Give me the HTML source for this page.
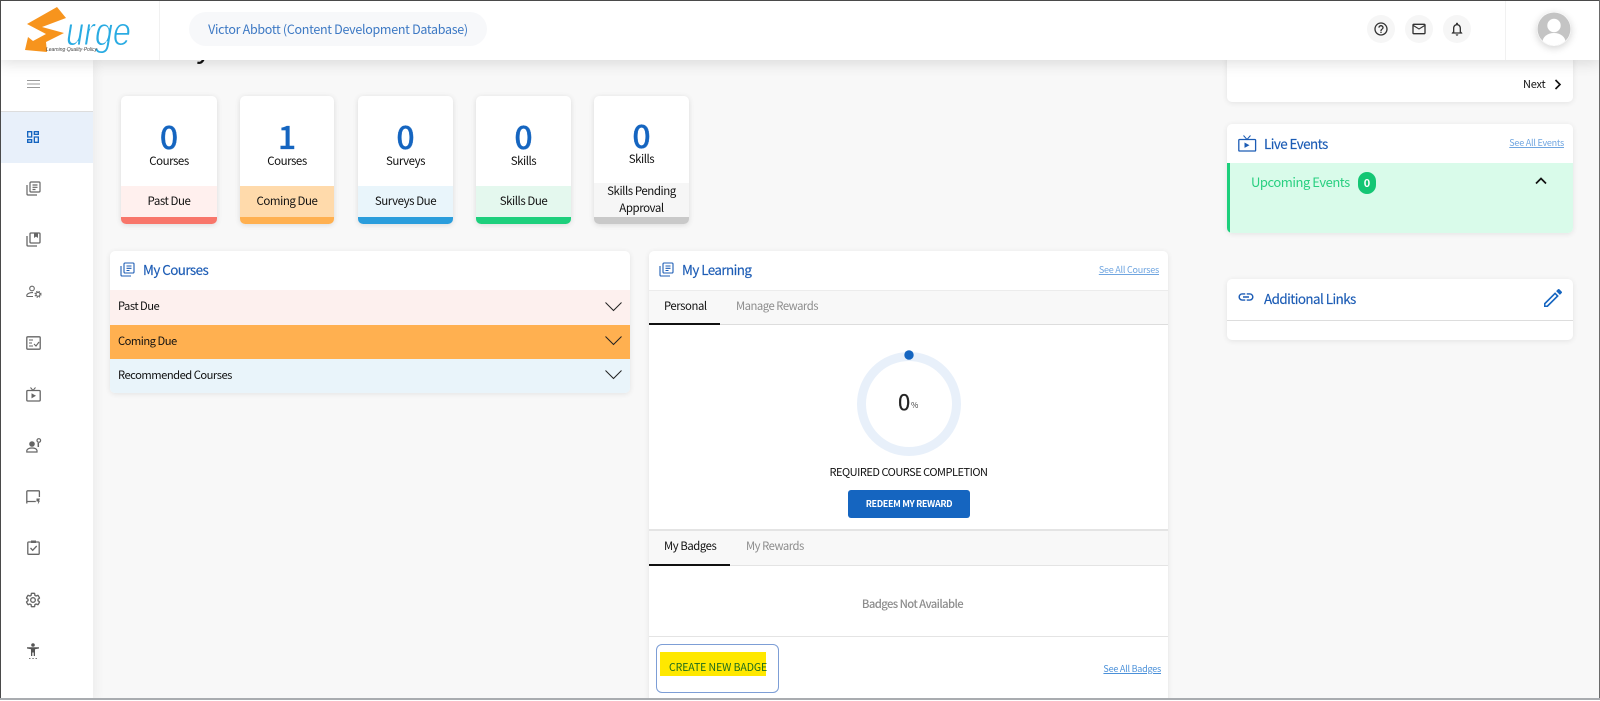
<!DOCTYPE html>
<html><head><meta charset="utf-8"><title>Surge</title>
<style>
*{box-sizing:border-box;margin:0;padding:0}
html,body{width:1600px;height:701px;overflow:hidden;background:#f8f8f8}
body{position:relative;font-family:"Noto Sans CJK SC","Liberation Sans",sans-serif;color:#111;font-size:11.3px;letter-spacing:-.42px}
.a{position:absolute}
.t{position:absolute;white-space:nowrap;line-height:16px}
.c{text-align:center}
.card{position:absolute;background:#fff;border-radius:5px;box-shadow:0 1px 6px rgba(0,0,0,.09)}
.stat{position:absolute;top:96px;height:128px;background:#fff;border-radius:5px;box-shadow:0 1px 6px rgba(0,0,0,.12);overflow:hidden;text-align:center}
.stat b{position:absolute;left:0;right:0;top:18px;font-weight:500;font-size:32px;line-height:44px;color:#1565c0;letter-spacing:0;-webkit-text-stroke:.3px #1565c0}
.stat i{position:absolute;left:0;right:0;top:57px;font-style:normal;font-size:11.500px;line-height:16px;letter-spacing:-.48px}
.stat u{position:absolute;left:0;right:0;top:90px;height:31px;text-decoration:none;line-height:31px;font-size:11.500px;letter-spacing:-.45px}
.stat s{position:absolute;left:0;right:0;bottom:0;height:7px;text-decoration:none}
.title{color:#1c5cb5;font-size:13.400px;letter-spacing:-.55px;-webkit-text-stroke:.15px #1c5cb5}
.lnk{color:#6fa5e0;font-size:9px;letter-spacing:-.22px;text-decoration:underline}
.row{position:absolute;left:0;right:0;padding-left:8px;font-size:11.200px;letter-spacing:-.5px}
.i{position:absolute;fill:none;stroke:#666}
.f{fill:#666;stroke:none}
</style></head><body>

<!-- page title remnant -->
<div class="t" style="left:196px;top:27px;font-size:30px;line-height:34px;letter-spacing:0;color:#111">y</div>

<!-- sidebar -->
<div class="a" style="left:0;top:60px;width:93px;height:641px;background:#fff;box-shadow:3px 0 10px rgba(0,0,0,.05)"></div>
<div class="a" style="left:1px;top:111px;width:92px;height:52px;background:#e8f0fa;border-top:1px solid #ddd"></div>

<svg class="i" style="left:27px;top:78px;stroke:#999" width="13" height="12" viewBox="0 0 13 12" stroke-width="1.100"><path d="M0 2.500h13M0 6h13M0 9.500h13"/></svg>
<svg class="a" style="left:25px;top:129px" width="16" height="16" viewBox="0 0 24 24"><path fill="#1565c0" d="M19 5v2h-4V5h4M9 5v6H5V5h4m10 8v6h-4v-6h4M9 17v2H5v-2h4M21 3h-8v6h8V3zM11 3H3v10h8V3zm10 8h-8v10h8V11zm-10 4H3v6h8v-6z"/></svg>
<svg class="i" style="left:26px;top:181px" width="15" height="15" viewBox="0 0 15 15" stroke-width="1.200"><rect x="4" y="1" width="10" height="10" rx="1"/><path d="M1 4v9a1 1 0 0 0 1 1h9M6.500 4h5M6.500 6.300h5M6.500 8.500h3"/></svg>
<svg class="i" style="left:26px;top:232px" width="15" height="15" viewBox="0 0 15 15" stroke-width="1.300"><rect x="4" y="1" width="10" height="10" rx="1"/><path d="M1 4v9a1 1 0 0 0 1 1h9"/><path class="f" d="M8 1h4v5l-2-1.400L8 6z"/></svg>
<svg class="i" style="left:26px;top:285px" width="16" height="15" viewBox="0 0 16 15" stroke-width="1.100"><circle cx="6" cy="3.500" r="2.300"/><path d="M.8 11.500v-1.200C1 8.500 4 7.500 7 7.600M.8 11.500H7"/><circle cx="12" cy="9.300" r="2"/><circle cx="12" cy="9.300" r="3" stroke-dasharray="1.200 1.200"/></svg>
<svg class="i" style="left:26px;top:336px" width="15" height="14" viewBox="0 0 15 14" stroke-width="1.300"><rect x=".8" y=".8" width="13.400" height="12.400" rx="1"/><path d="M3 4h4M3 7h3M3 10h4M8 8l2 2 3-4" stroke-width="1.100"/></svg>
<svg class="i" style="left:26px;top:387px" width="15" height="15" viewBox="0 0 15 15" stroke-width="1.300"><rect x=".8" y="3.500" width="13.400" height="10.500" rx="1"/><path d="M4.500 .5l2.500 3 2.500-3" stroke-width="1"/><path class="f" d="M5.500 6.200l4.500 2.600-4.500 2.600z"/></svg>
<svg class="i" style="left:26px;top:438px" width="16" height="15" viewBox="0 0 16 15" stroke-width="1.200"><circle class="f" cx="6" cy="6" r="2.800"/><path d="M.8 14v-1.500C1.500 10.500 4 10 6 10s4.500.5 5 2.500V14H.8z"/><circle cx="12.800" cy="2.500" r="1.800"/><path d="M12.300 5v4" stroke-width="1.500"/></svg>
<svg class="i" style="left:26px;top:490px" width="15" height="15" viewBox="0 0 15 15" stroke-width="1.300"><path d="M.8 13.500V1.600a.8.800 0 0 1 .8-.8h11a.8.800 0 0 1 .8.800V7M.8 11.500h9"/><path class="f" d="M10.500 8.500h3.500l-1 2.200h1L11.800 14.500l.4-3H10.500z"/></svg>
<svg class="i" style="left:27px;top:540px" width="13" height="15" viewBox="0 0 13 15" stroke-width="1.300"><rect x=".8" y="2" width="11.400" height="12.300" rx=".8"/><path d="M3.500 8l2.200 2.300 4-4.300"/><path class="f" d="M4 .5h5v2.500H4z"/></svg>
<svg class="a" style="left:25px;top:592px" width="16" height="16" viewBox="0 0 24 24" fill="none" stroke="#666" stroke-width="2"><path d="M19.430 12.980c.04-.32.07-.64.07-.98 0-.34-.03-.66-.07-.98l2.110-1.650c.19-.15.24-.42.12-.64l-2-3.460c-.09-.16-.26-.25-.44-.25-.06 0-.12.01-.17.03l-2.490 1c-.52-.4-1.080-.73-1.690-.98l-.38-2.650C14.460 2.180 14.250 2 14 2h-4c-.25 0-.46.18-.49.42l-.38 2.650c-.61.25-1.170.59-1.690.98l-2.490-1c-.06-.02-.12-.03-.18-.03-.17 0-.34.09-.43.25l-2 3.460c-.13.22-.07.49.12.64l2.110 1.650c-.04.32-.07.65-.07.98 0 .33.03.66.07.98l-2.110 1.650c-.19.15-.24.42-.12.64l2 3.460c.09.16.26.25.44.25.06 0 .12-.01.17-.03l2.490-1c.52.4 1.080.73 1.690.98l.38 2.650c.03.24.24.42.49.42h4c.25 0 .46-.18.49-.42l.38-2.650c.61-.25 1.170-.59 1.690-.98l2.490 1c.06.02.12.03.18.03.17 0 .34-.09.43-.25l2-3.460c.12-.22.07-.49-.12-.64l-2.110-1.650z"/><circle cx="12" cy="12" r="3.500"/></svg>
<svg class="a" style="left:26px;top:643px" width="14" height="17" viewBox="0 0 14 17"><circle cx="7" cy="2" r="1.800" fill="#555"/><path fill="#555" d="M1 4.200h12v1.300L9 6.300V13H7.700V9.500H6.300V13H5V6.300L1 5.500z"/><path d="M3 15.500h1.500M6.300 15.500h1.500M9.500 15.500H11" stroke="#777" stroke-width="1"/></svg>

<!-- stat cards -->
<div class="stat" style="left:121px;width:96px"><b>0</b><i>Courses</i><u style="background:#fff0ee">Past Due</u><s style="background:#f8766a"></s></div>
<div class="stat" style="left:240px;width:94px"><b>1</b><i>Courses</i><u style="background:#ffdaab">Coming Due</u><s style="background:#ffb050"></s></div>
<div class="stat" style="left:358px;width:95px"><b>0</b><i>Surveys</i><u style="background:#e9f5fb">Surveys Due</u><s style="background:#2a9ddc"></s></div>
<div class="stat" style="left:476px;width:95px"><b>0</b><i>Skills</i><u style="background:#e4f8ee">Skills Due</u><s style="background:#1dcf7c"></s></div>
<div class="stat" style="left:594px;width:95px"><b style="top:17px">0</b><i style="top:55px">Skills</i><u style="top:87px;height:41px;background:#f6f6f6;line-height:16.500px">Skills Pending<br>Approval</u><s style="background:#c9c9c9"></s></div>

<!-- My Courses -->
<div class="card" style="left:110px;top:251px;width:520px;height:142px;overflow:hidden">
  <svg class="i" style="left:10px;top:11px;stroke:#1c5cb5" width="15" height="15" viewBox="0 0 15 15" stroke-width="1.100"><rect x="4" y="1" width="10" height="10" rx="1"/><path d="M1 4v9a1 1 0 0 0 1 1h9M6.500 4h5M6.500 6.300h5M6.500 8.500h3"/></svg>
  <div class="t title" style="left:33px;top:10px">My Courses</div>
  <div class="row" style="top:39px;height:35px;line-height:32px;background:#fdf0ee">Past Due</div>
  <div class="row" style="top:74px;height:34px;line-height:32px;background:#ffb050">Coming Due</div>
  <div class="row" style="top:108px;height:34px;line-height:32px;background:#e9f4fa">Recommended Courses</div>
  <svg class="a" style="left:495px;top:51px" width="17" height="10" viewBox="0 0 17 10" fill="none" stroke="#222" stroke-width="1"><path d="M.5 .5l8 8 8-8"/></svg>
  <svg class="a" style="left:495px;top:85px" width="17" height="10" viewBox="0 0 17 10" fill="none" stroke="#222" stroke-width="1"><path d="M.5 .5l8 8 8-8"/></svg>
  <svg class="a" style="left:495px;top:119px" width="17" height="10" viewBox="0 0 17 10" fill="none" stroke="#222" stroke-width="1"><path d="M.5 .5l8 8 8-8"/></svg>
</div>

<!-- My Learning -->
<div class="card" style="left:649px;top:251px;width:519px;height:460px;overflow:hidden">
  <svg class="i" style="left:10px;top:11px;stroke:#1c5cb5" width="15" height="15" viewBox="0 0 15 15" stroke-width="1.100"><rect x="4" y="1" width="10" height="10" rx="1"/><path d="M1 4v9a1 1 0 0 0 1 1h9M6.500 4h5M6.500 6.300h5M6.500 8.500h3"/></svg>
  <div class="t title" style="left:33px;top:10px">My Learning</div>
  <div class="t lnk" style="right:9px;top:11px">See All Courses</div>

  <div class="a" style="left:0;top:39px;width:519px;height:35px;background:#f8f8f8;border-top:1px solid #ececec;border-bottom:1px solid #ddd"></div>
  <div class="a" style="left:0;top:39px;width:71px;height:35px;border-bottom:2px solid #111"></div>
  <div class="t" style="left:15px;top:47px">Personal</div>
  <div class="t" style="left:87px;top:47px;color:#8d8d8d;letter-spacing:-.5px">Manage Rewards</div>

  <svg class="a" style="left:201px;top:94px" width="118" height="118" viewBox="0 0 118 118"><circle cx="59" cy="59" r="47.500" fill="none" stroke="#e8f0fa" stroke-width="9"/><circle cx="59" cy="10" r="4.700" fill="#1565c0"/></svg>
  <div class="t" style="left:249px;top:136px;font-size:22px;line-height:28px;letter-spacing:0;color:#222;-webkit-text-stroke:.25px #222">0</div>
  <div class="t" style="left:262px;top:149px;font-size:8px;line-height:12px;letter-spacing:0;color:#444">%</div>
  <div class="t c" style="left:0;width:519px;top:213px;font-size:11px;letter-spacing:-.48px;color:#111">REQUIRED COURSE COMPLETION</div>
  <div class="a c" style="left:199px;top:239px;width:122px;height:28px;background:#1565c0;border-radius:3px;color:#fff;font-size:9px;letter-spacing:-.35px;font-weight:700;line-height:28px">REDEEM MY REWARD</div>

  <div class="a" style="left:0;top:278px;width:519px;height:37px;background:#f8f8f8;border-top:2px solid #e4e4e4;border-bottom:1px solid #e4e4e4"></div>
  <div class="a" style="left:0;top:280px;width:81px;height:35px;border-bottom:2px solid #111"></div>
  <div class="t" style="left:15px;top:287px">My Badges</div>
  <div class="t" style="left:97px;top:287px;color:#8d8d8d;letter-spacing:-.5px">My Rewards</div>
  <div class="t c" style="left:0;width:527px;top:345px;color:#8d8d8d;font-weight:500;letter-spacing:-.6px">Badges Not Available</div>
  <div class="a" style="left:0;top:385px;width:519px;height:1px;background:#e4e4e4"></div>
  <div class="a" style="left:7px;top:393px;width:123px;height:49px;border:1px solid #7d9ed6;border-radius:6px"></div>
  <div class="a" style="left:11px;top:401px;width:106px;height:24px;background:#ffe800"></div>
  <div class="t" style="left:20px;top:409px;font-size:10.500px;letter-spacing:-.08px;color:#1d6b1d">CREATE NEW BADGE</div>
  <div class="t lnk" style="right:7px;top:410px;color:#4a90d9">See All Badges</div>
</div>

<!-- Right column -->
<div class="card" style="left:1227px;top:40px;width:346px;height:62px">
  <div class="t" style="left:296px;top:36px;font-size:11px;letter-spacing:-.2px">Next</div>
  <svg class="a" style="left:327px;top:39px" width="8" height="11" viewBox="0 0 8 11" fill="none" stroke="#111" stroke-width="1.600"><path d="M1.500 1l4.500 4.500L1.500 10"/></svg>
</div>

<div class="card" style="left:1227px;top:124px;width:346px;height:109px;overflow:hidden">
  <svg class="a" style="left:11px;top:11px;" width="19" height="17" viewBox="0 0 19 17" fill="none" stroke="#1c5cb5" stroke-width="1.300"><rect x=".8" y="4.500" width="16.800" height="11.500" rx=".8"/><path d="M5.500 .5L9 4.500 12.500 .5" stroke-width="1"/><path d="M6.500 7.500l5 2.700-5 2.700z" fill="#1c5cb5" stroke="none"/></svg>
  <div class="t title" style="left:37px;top:11px">Live Events</div>
  <div class="t lnk" style="right:9px;top:11px">See All Events</div>
  <div class="a" style="left:0;top:39px;width:346px;height:70px;background:#d9fbea;border-left:3px solid #1dcf7c"></div>
  <div class="t" style="left:24px;top:50px;font-size:13px;letter-spacing:-.46px;color:#28cf80">Upcoming Events</div>
  <div class="a c" style="left:131px;top:48px;width:18px;height:22px;border-radius:9px;background:#14c674;color:#fff;font-weight:700;font-size:11px;letter-spacing:0;line-height:22px">0</div>
  <svg class="a" style="left:308px;top:53px" width="12" height="8" viewBox="0 0 12 8" fill="none" stroke="#111" stroke-width="1.700"><path d="M1 6.500l5-5 5 5"/></svg>
</div>

<div class="card" style="left:1227px;top:279px;width:346px;height:61px">
  <svg class="a" style="left:10px;top:9px" width="18" height="18" viewBox="0 0 24 24"><path fill="#1c5cb5" d="M3.900 12c0-1.710 1.390-3.100 3.100-3.100h4V7H7c-2.760 0-5 2.240-5 5s2.240 5 5 5h4v-1.900H7c-1.710 0-3.100-1.390-3.100-3.100zM8 13h8v-2H8v2zm9-6h-4v1.900h4c1.710 0 3.100 1.390 3.100 3.100s-1.390 3.100-3.100 3.100h-4V17h4c2.760 0 5-2.240 5-5s-2.240-5-5-5z"/></svg>
  <div class="t title" style="left:37px;top:11px">Additional Links</div>
  <svg class="a" style="left:314px;top:7px" width="24" height="24" viewBox="0 0 24 24"><path fill="#1565c0" d="M3 17.250V21h3.750L17.810 9.940l-3.750-3.750L3 17.250zM5.900 19.500H4.500v-1.400l9.560-9.560 1.400 1.400L5.900 19.500zM20.710 7.040c.39-.39.39-1.020 0-1.410l-2.340-2.340c-.39-.39-1.020-.39-1.410 0l-1.830 1.830 3.750 3.750 1.830-1.830z"/></svg>
  <div class="a" style="left:0;top:41px;width:346px;height:1px;background:#ddd"></div>
</div>

<!-- Header -->
<div class="a" style="left:0;top:0;width:1600px;height:60px;background:#fff;box-shadow:0 3px 14px rgba(0,0,0,.13)"></div>
<div class="a" style="left:159px;top:0;width:1px;height:60px;background:#f1f1f1"></div>
<div class="a" style="left:1505px;top:0;width:1px;height:60px;background:#f1f1f1"></div>
<svg class="a" style="left:0;top:0" width="159" height="60" viewBox="0 0 159 60">
  <path fill="#f7941d" d="M57 7L66 18 42 27 64 33 46 42 47 52 25 50 28 37 33 41 46 34 27 24z"/>
  <text x="66" y="45" font-family="Liberation Sans" font-style="italic" font-size="40" fill="#29abe2" stroke="#fff" stroke-width=".9" textLength="65" lengthAdjust="spacingAndGlyphs" letter-spacing="0">urge</text>
  <text x="46" y="51" font-family="Liberation Sans" font-style="italic" font-size="5" fill="#444" textLength="51" lengthAdjust="spacingAndGlyphs" letter-spacing="0">Learning·Quality·Policy</text>
</svg>
<div class="a c" style="left:189px;top:12px;width:298px;height:34px;border-radius:17px;background:#f7f8fa;color:#3d79c4;font-size:12.500px;letter-spacing:-.3px;line-height:33px">Victor Abbott (Content Development Database)</div>

<div class="a" style="left:1367px;top:15px;width:28px;height:28px;border-radius:50%;background:#f6f6f6"></div>
<div class="a" style="left:1405px;top:15px;width:28px;height:28px;border-radius:50%;background:#f6f6f6"></div>
<div class="a" style="left:1443px;top:15px;width:28px;height:28px;border-radius:50%;background:#f6f6f6"></div>
<svg class="a" style="left:1373px;top:21px" width="16" height="16" viewBox="0 0 24 24"><path fill="#333" d="M11 18h2v-2h-2v2zm1-16C6.480 2 2 6.480 2 12s4.480 10 10 10 10-4.480 10-10S17.520 2 12 2zm0 18c-4.410 0-8-3.590-8-8s3.590-8 8-8 8 3.590 8 8-3.590 8-8 8zm0-14c-2.210 0-4 1.790-4 4h2c0-1.100.9-2 2-2s2 .9 2 2c0 2-3 1.750-3 5h2c0-2.250 3-2.500 3-5 0-2.210-1.790-4-4-4z"/></svg>
<svg class="a" style="left:1411px;top:21px" width="16" height="16" viewBox="0 0 24 24"><path fill="#333" d="M20 4H4c-1.100 0-1.990.9-1.990 2L2 18c0 1.100.9 2 2 2h16c1.100 0 2-.9 2-2V6c0-1.100-.9-2-2-2zm0 14H4V8l8 5 8-5v10zm-8-7L4 6h16l-8 5z"/></svg>
<svg class="a" style="left:1449px;top:21px" width="16" height="16" viewBox="0 0 24 24"><path fill="#333" d="M12 22c1.100 0 2-.9 2-2h-4c0 1.100.9 2 2 2zm6-6v-5c0-3.070-1.630-5.640-4.500-6.320V4c0-.83-.67-1.500-1.500-1.500s-1.500.67-1.500 1.500v.68C7.640 5.360 6 7.920 6 11v5l-2 2v1h16v-1l-2-2zm-2 1H8v-6c0-2.480 1.510-4.500 4-4.500s4 2.020 4 4.500v6z"/></svg>

<div class="a" style="left:1537px;top:12px;width:34px;height:34px;border-radius:50%;box-shadow:0 2px 8px rgba(0,0,0,.18)"></div>
<svg class="a" style="left:1537px;top:12px" width="34" height="34" viewBox="0 0 34 34"><defs><clipPath id="av"><circle cx="17" cy="17" r="16.500"/></clipPath></defs><circle cx="17" cy="17" r="16.500" fill="#c4c4c4"/><g clip-path="url(#av)" fill="#fff"><circle cx="17" cy="13.500" r="6.700"/><ellipse cx="17" cy="30" rx="11.500" ry="9"/></g></svg>

<!-- screenshot frame -->
<div class="a" style="left:0;top:0;width:1600px;height:1px;background:#4a4a4a"></div>
<div class="a" style="left:0;top:0;width:1px;height:701px;background:#4a4a4a"></div>
<div class="a" style="left:1599px;top:0;width:1px;height:701px;background:#6a6a6a"></div>
<div class="a" style="left:0;top:698px;width:1600px;height:3px;background:#a9acb0;border-bottom:1px solid #fff"></div>
</body></html>
